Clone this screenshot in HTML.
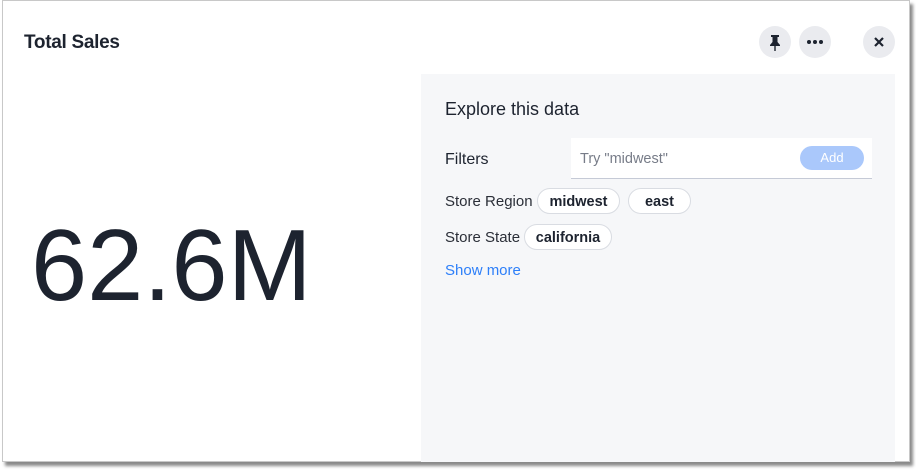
<!DOCTYPE html>
<html><head><style>
body{margin:0;width:916px;height:470px;background:#fff;position:relative;overflow:hidden;font-family:"Liberation Sans",sans-serif;color:#1d232f}
.frame{position:absolute;left:2px;top:0;width:908px;height:462px;background:#fff;border:1px solid #c8c8c8;box-shadow:3px 4px 3px #8a8a8a;box-sizing:border-box}
.title{position:absolute;left:24px;top:32px;font-size:19px;font-weight:bold;letter-spacing:-0.3px}
.btn{position:absolute;top:26px;width:32px;height:32px;border-radius:50%;background:#eaebef}
.panel{position:absolute;left:421px;top:74px;width:474px;height:388px;background:#f6f7f9}
.big{position:absolute;left:31px;top:206px;font-size:101px;line-height:1.2}
.h{position:absolute;font-size:18px}
.lbl{position:absolute;font-size:15px;color:#2b2f38}
.chip{position:absolute;height:26px;border:1px solid #d9dce2;border-radius:14px;background:#fff;font-size:14.5px;font-weight:bold;line-height:26px;text-align:center;box-sizing:border-box}
</style></head><body>
<div class="frame"></div>
<div class="title">Total Sales</div>
<div class="btn" style="left:759px"><svg width="32" height="32"><path d="M12 9h8v2h-1.5v5l2.5 3v1h-10v-1l2.5-3v-5H12z" fill="#1d232f"/><rect x="15.3" y="20" width="1.4" height="5" fill="#1d232f"/></svg></div>
<div class="btn" style="left:799px"><svg width="32" height="32"><circle cx="10" cy="16" r="2" fill="#1d232f"/><circle cx="16" cy="16" r="2" fill="#1d232f"/><circle cx="22" cy="16" r="2" fill="#1d232f"/></svg></div>
<div class="btn" style="left:863px"><svg width="32" height="32"><path d="M12 12l8 8M20 12l-8 8" stroke="#1d232f" stroke-width="2.2"/></svg></div>
<div class="panel"></div>
<div class="big">62.6M</div>
<div class="h" style="left:445px;top:99px">Explore this data</div>
<div class="lbl" style="left:445px;top:151px;font-size:16px;color:#1d232f">Filters</div>
<div style="position:absolute;left:571px;top:138px;width:301px;height:40px;background:#fff;border-bottom:1px solid #c5cad6"></div>
<div class="lbl" style="left:580px;top:151px;color:#777c88;font-size:14.5px">Try "midwest"</div>
<div style="position:absolute;left:800px;top:146px;width:64px;height:24px;border-radius:12px;background:#aac8fb;color:#fff;font-size:13px;line-height:24px;text-align:center">Add</div>
<div class="lbl" style="left:445px;top:193px">Store Region</div>
<div class="chip" style="left:537px;top:188px;width:83px">midwest</div>
<div class="chip" style="left:628px;top:188px;width:63px">east</div>
<div class="lbl" style="left:445px;top:229px">Store State</div>
<div class="chip" style="left:524px;top:224px;width:88px">california</div>
<div class="lbl" style="left:445px;top:262px;color:#2d7ff9">Show more</div>
</body></html>
